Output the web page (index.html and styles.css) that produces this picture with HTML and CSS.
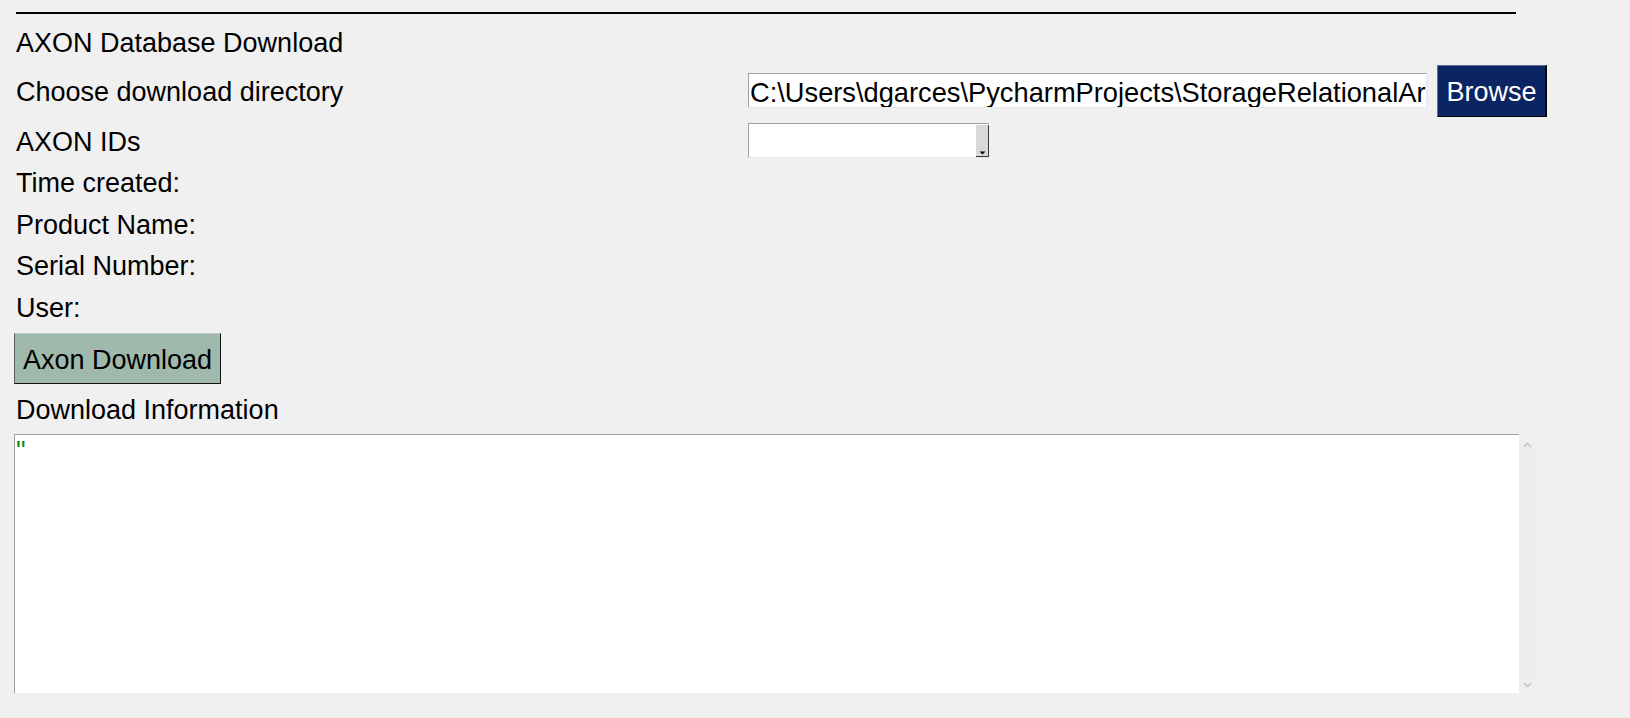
FILE: index.html
```html
<!DOCTYPE html>
<html>
<head>
<meta charset="utf-8">
<title>AXON Database Download</title>
<link rel="stylesheet" href="styles.css">
</head>
<body>
<div class="page">
  <div class="sep"></div>
  <div class="label title">AXON Database Download</div>

  <div class="row row-dir">
    <div class="label cell-label">Choose download directory</div>
    <div class="entry"><span class="entry-text">C:\Users\dgarces\PycharmProjects\StorageRelationalAr</span></div>
    <div class="btn btn-browse">Browse</div>
  </div>

  <div class="row row-ids">
    <div class="label cell-label">AXON IDs</div>
    <div class="combo">
      <div class="combo-field"></div>
      <div class="combo-arrow">
        <svg width="7" height="4" viewBox="0 0 7 4"><path d="M0.5 0.5 L6.5 0.5 L3.5 3.5 Z" fill="#000"/></svg>
      </div>
    </div>
  </div>

  <div class="info-list">
    <div class="label">Time created:</div>
    <div class="label">Product Name:</div>
    <div class="label">Serial Number:</div>
    <div class="label">User:</div>
  </div>

  <div class="btn btn-download">Axon Download</div>

  <div class="label dl-info">Download Information</div>

  <div class="textbox">
    <div class="text-area"><span class="quote">"</span></div>
    <div class="vscroll">
      <svg width="9" height="6" viewBox="0 0 9 6"><path d="M1 5 L4.5 1.5 L8 5" fill="none" stroke="#c4c4c4" stroke-width="1.6"/></svg>
      <svg width="9" height="6" viewBox="0 0 9 6"><path d="M1 1 L4.5 4.5 L8 1" fill="none" stroke="#c4c4c4" stroke-width="1.6"/></svg>
    </div>
  </div>
</div>
</body>
</html>
```

FILE: styles.css
```css
html, body {
  margin: 0;
  padding: 0;
  background: #f0f0f0;
}

body {
  width: 1630px;
  height: 718px;
  overflow: hidden;
  font-family: "Liberation Sans", Arial, sans-serif;
  font-size: 27px;
  color: #000;
}

.page {
  padding-left: 14px;
  display: flex;
  flex-direction: column;
  align-items: flex-start;
}

.sep {
  margin-top: 12px;
  margin-left: 2px;
  width: 1500px;
  height: 2px;
  background: #000;
}

.label {
  line-height: 31px;
  height: 31px;
  padding-left: 2px;
  white-space: nowrap;
}

.title {
  margin-top: 14px;
}

.row {
  display: flex;
  align-items: flex-start;
}

.row-dir {
  margin-top: 14px;
  height: 35px;
}

.row-ids {
  margin-top: 15px;
  height: 35px;
}

.cell-label {
  width: 732px;
  margin-top: 4px;
}

.entry {
  box-sizing: border-box;
  width: 679px;
  height: 35px;
  background: #fff;
  border-top: 1px solid #a0a0a0;
  border-left: 1px solid #a0a0a0;
  border-bottom: 1px solid #e8e8e8;
  border-right: 1px solid #e8e8e8;
  overflow: hidden;
  white-space: nowrap;
  line-height: 31px;
  padding: 3px 0 0 1px;
  font-size: 27.25px;
}

.btn {
  box-sizing: border-box;
  line-height: 31px;
  white-space: nowrap;
  display: flex;
  align-items: center;
  justify-content: center;
  padding-top: 4px;
}

.btn-browse {
  margin-left: 10px;
  margin-top: -8px;
  width: 110px;
  height: 52px;
  padding-top: 2px;
  background: #0b2462;
  color: #fff;
  border-top: 1px solid #5d6f98;
  border-left: 1px solid #5d6f98;
  border-right: 2px solid #050505;
  border-bottom: 1px solid #050505;
}

.combo {
  box-sizing: border-box;
  width: 241px;
  height: 35px;
  display: flex;
  background: #fff;
  border-top: 1px solid #a0a0a0;
  border-left: 1px solid #a0a0a0;
  border-bottom: 1px solid #e3e3e3;
}

.combo-field {
  flex: 1;
}

.combo-arrow {
  box-sizing: border-box;
  width: 13px;
  margin-top: 1px;
  background: #d9d9d9;
  border-right: 1px solid #3a3a3a;
  border-bottom: 1px solid #3a3a3a;
  display: flex;
  align-items: flex-end;
  justify-content: center;
  padding-bottom: 1px;
}

.combo-arrow svg {
  display: block;
}

.info-list {
  margin-top: 10px;
  display: flex;
  flex-direction: column;
  gap: 10.5px;
}

.btn-download {
  margin-top: 9.5px;
  width: 207px;
  height: 51px;
  background: #9fb9ac;
  color: #000;
  border-top: 1px solid #b8cac1;
  border-left: 1px solid #55625c;
  border-right: 1px solid #111;
  border-bottom: 1px solid #111;
}

.dl-info {
  margin-top: 10.5px;
}

.textbox {
  margin-top: 8px;
  display: flex;
  height: 259px;
}

.text-area {
  box-sizing: border-box;
  width: 1505px;
  height: 100%;
  background: #fff;
  border-top: 1px solid #a0a0a0;
  border-left: 1px solid #a0a0a0;
  padding: 1px 0 0 1px;
  line-height: 31px;
}

.quote {
  color: #0c8a0c;
}

.vscroll {
  width: 17px;
  height: 100%;
  background: #eeeeee;
  display: flex;
  flex-direction: column;
  justify-content: space-between;
  align-items: center;
  padding: 8px 0 5px;
  box-sizing: border-box;
}

.vscroll svg {
  display: block;
}
```
